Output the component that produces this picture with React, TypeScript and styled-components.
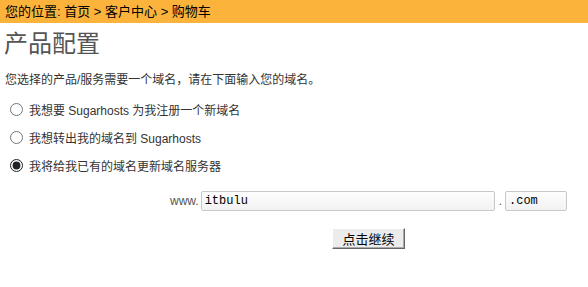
import styled, { createGlobalStyle } from 'styled-components';

const Global = createGlobalStyle`
  body {
    margin: 0;
    background: #fff;
    font-family: "Liberation Sans", Arial, "Noto Sans CJK SC", sans-serif;
    font-size: 12px;
    color: #333;
  }
`;

const Breadcrumb = styled.div`
  background-color: #fbb33c;
  height: 23px;
  line-height: 23px;
  padding-left: 5px;
  font-size: 13px;
  color: #000;
`;

const Title = styled.h1`
  margin: 3px 0 0 4px;
  font-family: "Noto Sans CJK SC", sans-serif;
  font-weight: normal;
  font-size: 24px;
  line-height: 32px;
  color: #555;
`;

const Intro = styled.p`
  margin: 13px 0 0 5px;
  line-height: 18px;
`;

const Options = styled.div`
  display: flex;
  flex-direction: column;
  gap: 9px;
  margin: 11px 0 0 8px;
`;

const Option = styled.label`
  display: flex;
  align-items: center;
  gap: 4px;
  height: 19px;
`;

const Radio = styled.input.attrs({ type: 'radio', name: 'domain' })`
  margin: 0 2px 0 2px;
  width: 13px;
  height: 13px;
  accent-color: #222;
`;

const DomainRow = styled.div`
  display: flex;
  align-items: center;
  margin: 16px 0 0 170px;
  color: #555;
`;

const Field = styled.input<{ $w: number }>`
  box-sizing: border-box;
  width: ${({ $w }) => $w}px;
  height: 20px;
  margin-left: ${({ $w }) => ($w > 100 ? 2 : 3)}px;
  padding: 0 3px;
  border: 1px solid #c8c8c8;
  border-radius: 2px;
  background: linear-gradient(#fdfdfd, #f2f2f2);
  font-family: "Liberation Mono", "Courier New", monospace;
  font-size: 12px;
  color: #000;
`;

const Dot = styled.span`
  margin-left: 4px;
`;

const Actions = styled.div`
  display: flex;
  margin: 17px 0 0 332px;
`;

const Button = styled.button`
  width: 73px;
  height: 21px;
  padding: 0;
  border: 1px solid;
  border-color: #fff #666 #666 #fff;
  box-shadow: inset -1px -1px 0 #aaa;
  background: #ececec;
  font-family: "Noto Sans CJK SC", sans-serif;
  font-size: 13px;
  color: #000;
`;

export default function App() {
  return (
    <>
      <Global />
      <Breadcrumb>您的位置: 首页 &gt; 客户中心 &gt; 购物车</Breadcrumb>
      <Title>产品配置</Title>
      <Intro>您选择的产品/服务需要一个域名，请在下面输入您的域名。</Intro>
      <Options>
        <Option>
          <Radio />
          我想要 Sugarhosts 为我注册一个新域名
        </Option>
        <Option>
          <Radio />
          我想转出我的域名到 Sugarhosts
        </Option>
        <Option>
          <Radio defaultChecked />
          我将给我已有的域名更新域名服务器
        </Option>
      </Options>
      <DomainRow>
        www.
        <Field $w={294} defaultValue="itbulu" />
        <Dot>.</Dot>
        <Field $w={62} defaultValue=".com" />
      </DomainRow>
      <Actions>
        <Button>点击继续</Button>
      </Actions>
    </>
  );
}
